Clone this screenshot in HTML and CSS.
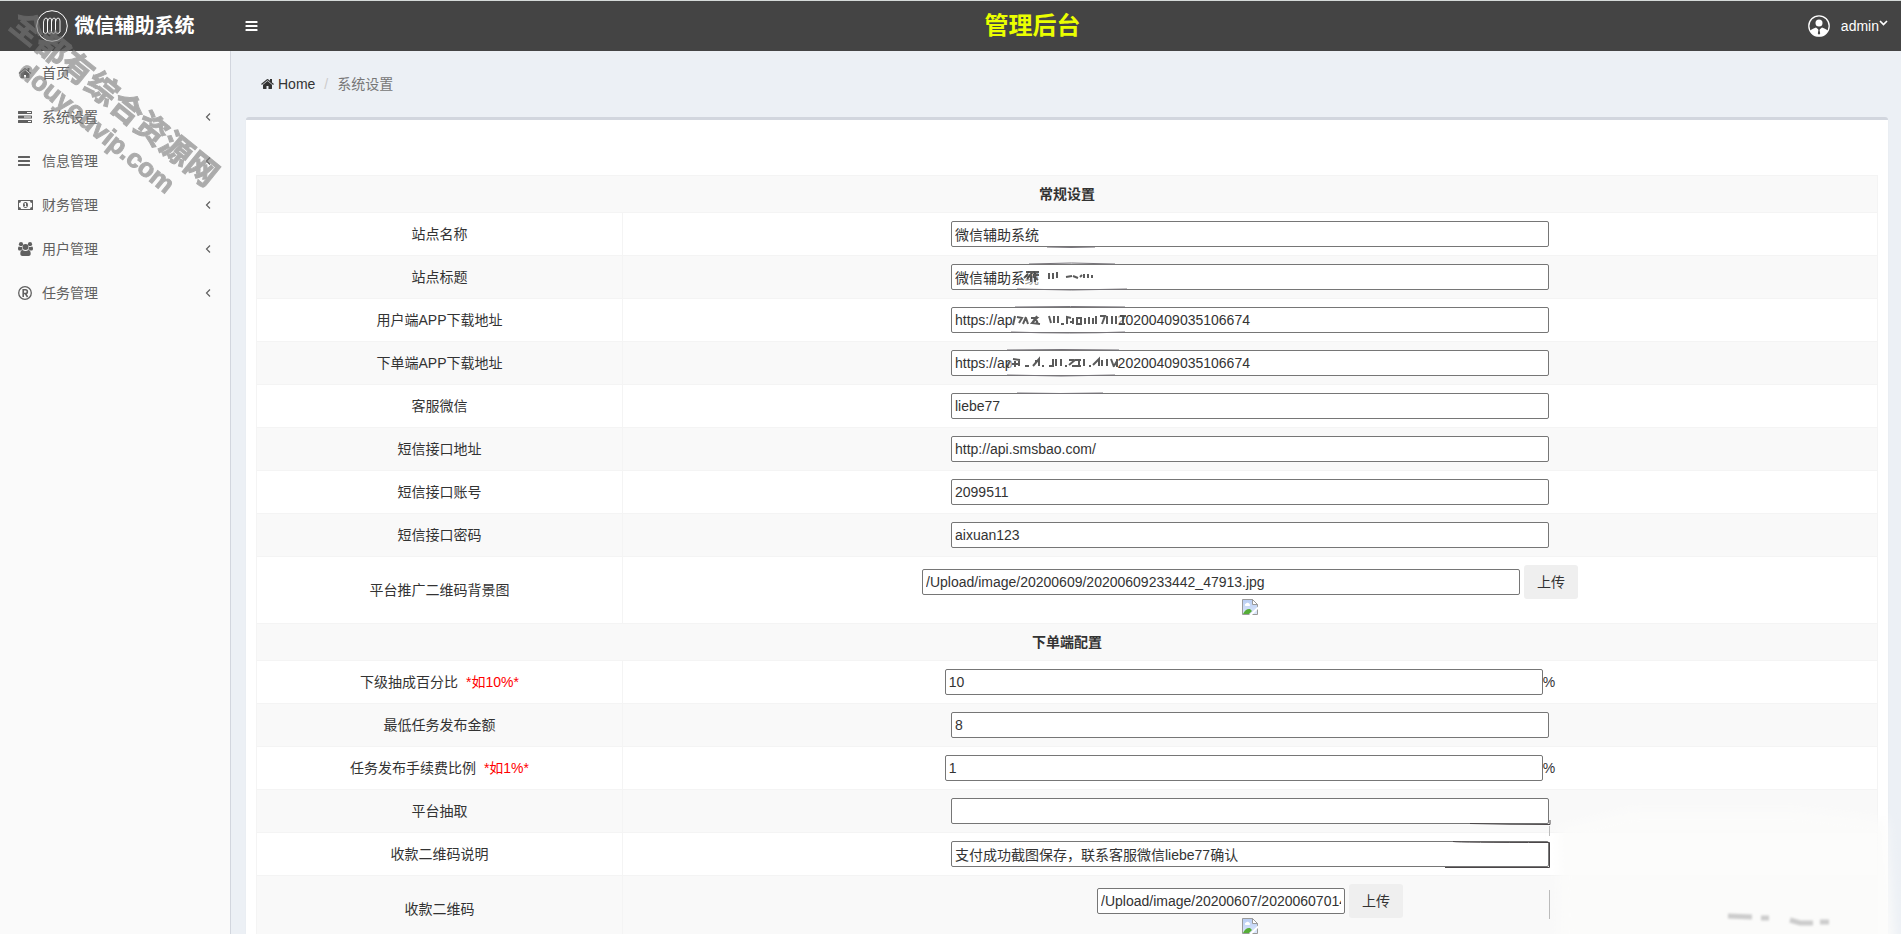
FILE: index.html
```html
<!DOCTYPE html>
<html lang="zh-CN">
<head>
<meta charset="utf-8">
<title>微信辅助系统 - 管理后台</title>
<link rel="stylesheet" href="styles.css">
</head>
<body>
<svg class="sprite" aria-hidden="true">
  <symbol id="i-home" viewBox="0 0 1664 1792"><path d="M1408 992v480q0 26-19 45t-45 19h-384v-384h-256v384h-384q-26 0-45-19t-19-45v-480q0-1 .5-3t.5-3l575-474 575 474q1 2 1 6zm223-69l-62 74q-8 9-21 11h-3q-13 0-21-7l-692-577-692 577q-12 8-24 7-13-2-21-11l-62-74q-8-10-7-23.5t11-21.500l719-599q32-26 76-26t76 26l244 204v-195q0-14 9-23t23-9h192q14 0 23 9t9 23v408l219 182q10 8 11 21.500t-7 23.500z"/></symbol>
  <symbol id="i-tasks" viewBox="0 0 14 14"><path fill-rule="evenodd" d="M.5 1h13a.5.5 0 0 1 .5.5v2a.5.5 0 0 1-.5.5H.5a.5.5 0 0 1-.5-.5v-2A.5.500 0 0 1 .5 1zM9 2v1h4V2zM.5 5.500h13a.5.500 0 0 1 .5.500v2a.5.500 0 0 1-.5.500H.5A.5.500 0 0 1 0 8V6a.5.500 0 0 1 .5-.5zM6 6.500v1h7v-1zM.5 10h13a.5.500 0 0 1 .5.500v2a.5.500 0 0 1-.5.500H.5a.5.500 0 0 1-.5-.5v-2A.5.500 0 0 1 .5 10zM10 11v1h3v-1z"/></symbol>
  <symbol id="i-bars" viewBox="0 0 12 14"><path d="M.5 2h11a.5.500 0 0 1 .5.500v1a.5.500 0 0 1-.5.500H.5a.5.500 0 0 1-.5-.5v-1A.5.500 0 0 1 .5 2zM.5 6h11a.5.500 0 0 1 .5.500v1a.5.500 0 0 1-.5.500H.5a.5.500 0 0 1-.5-.5v-1A.5.500 0 0 1 .5 6zM.5 10h11a.5.500 0 0 1 .5.500v1a.5.500 0 0 1-.5.500H.5a.5.500 0 0 1-.5-.5v-1A.5.500 0 0 1 .5 10z"/></symbol>
  <symbol id="i-money" viewBox="0 0 15 14"><path fill-rule="evenodd" d="M.5 2h14a.5.500 0 0 1 .5.500v9a.5.500 0 0 1-.5.500H.5a.5.500 0 0 1-.5-.5v-9A.5.500 0 0 1 .5 2zM3 3a2 2 0 0 1-2 2v4a2 2 0 0 1 2 2h9a2 2 0 0 1 2-2V5a2 2 0 0 1-2-2zM7.500 4C9 4 10 5.300 10 7s-1 3-2.500 3S5 8.700 5 7s1-3 2.500-3zM7.200 5L6 6l.5.600.5-.3V8.200H6.200V9h2.600v-.8H8V5z"/></symbol>
  <symbol id="i-users" viewBox="0 0 15 14"><circle cx="3" cy="2.200" r="2.100"/><circle cx="12" cy="2.200" r="2.100"/><circle cx="7.500" cy="5" r="3"/><path d="M0 6.500C0 5 .6 4.400 1.200 4.400c.5.400 1.100.7 1.800.7.500 0 .8-.1 1-.2 0 1 .3 1.900.9 2.600-.9 0-1.700.3-2.200 1H1.400C.6 8.500 0 7.900 0 6.500zM15 6.500c0-1.500-.6-2.100-1.200-2.100-.5.400-1.100.7-1.800.7-.5 0-.8-.1-1-.2 0 1-.3 1.900-.9 2.600.9 0 1.700.3 2.200 1h1.300c.8 0 1.400-.6 1.400-2zM2.300 11.800c0-2.400.8-3.900 2.300-3.900.8.600 1.800 1 2.900 1s2.100-.4 2.900-1c1.500 0 2.300 1.500 2.300 3.900 0 1.300-.8 2.200-2.100 2.200H4.400c-1.300 0-2.100-.9-2.100-2.200z"/></symbol>
  <symbol id="i-registered" viewBox="0 0 14 14"><circle cx="7" cy="7" r="6.300" fill="none" stroke="currentColor" stroke-width="1.300"/><path fill="none" stroke="currentColor" stroke-width="1.600" d="M5.200 11V3.800h2.300a1.800 1.800 0 0 1 0 3.700H5.200M7.300 7.500L9.600 11"/></symbol>
  <symbol id="i-angle" viewBox="0 0 6 10"><path fill="none" stroke="currentColor" stroke-width="1.200" d="M5 1.500L1.500 5 5 8.500"/></symbol>
  <symbol id="i-broken" viewBox="0 0 16 16"><defs><linearGradient id="sky" x2="0" y2="1"><stop offset="0" stop-color="#b8cdf3"/><stop offset="1" stop-color="#dde8fb"/></linearGradient></defs><path fill="url(#sky)" stroke="#9a9a9a" d="M.5 15.500V.5h10l5 5v10z"/><path fill="#fff" stroke="#9a9a9a" d="M10.500.5v5h5z"/><path fill="#fff" d="M3 6.500a1.500 1.500 0 0 1 1-2 2 2 0 0 1 3.500.5 1.200 1.200 0 0 1 0 2H3.500z"/><path fill="#56ad37" d="M1 15c2-4 4-5.500 7-5l2 2-3 3z"/><path fill="#fff" d="M16 7.500L7 16h3l6-6z"/></symbol>
</svg>

<header class="topbar">
  <a class="brand" href="#">
    <svg class="brand-mark" viewBox="0 0 32 32"><g fill="none" stroke="#fff"><circle cx="16" cy="16" r="15.300"/><path stroke-width=".9" d="M7.500 22.500V12q.5-4 2.500-4t1.500 3v11q-1.500 3-4 .5M11.500 22.500V12q.5-4 2.500-4t1.500 3v11q-1.500 3-4 .5M15.500 22.500V12q.5-4 2.500-4t1.500 3v11q-1.500 3-4 .5M19.500 22.500V12q.5-4 2.500-4t2 3v11q-2 3-4.500.5"/></g></svg>
    <span>微信辅助系统</span>
  </a>
  <button class="toggle" type="button" aria-label="菜单"><svg class="toggle-icon"><use href="#i-bars"/></svg></button>
  <h1 class="title">管理后台</h1>
  <button class="user" type="button">
    <svg class="avatar" viewBox="0 0 22 22"><circle cx="11" cy="11" r="10.200" fill="none" stroke="#fff" stroke-width="1.300"/><circle cx="11" cy="8" r="3.500" fill="#fff"/><path fill="#fff" d="M2 15.500c2-1.500 4-2.500 6-3L11 15l3-2.500c2 .5 4 1.500 6 3A10 10 0 0 1 2 15.500z"/><path fill="#444" d="M10.200 13.500h1.600l-.3 1.300.7 3.700-1.200 1.200-1.200-1.200.7-3.700z"/></svg>
    <span>admin</span><svg class="caret" viewBox="0 0 9 6"><path fill="none" stroke="#fff" stroke-width="1.700" d="M1 1l3.500 3.500L8 1"/></svg>
  </button>
</header>

<div class="shell">
  <nav class="sidebar">
    <a class="nav-item" href="#"><svg class="nav-icon"><use href="#i-home"/></svg><span class="nav-text">首页</span></a>
    <a class="nav-item" href="#"><svg class="nav-icon"><use href="#i-tasks"/></svg><span class="nav-text">系统设置</span><svg class="angle"><use href="#i-angle"/></svg></a>
    <a class="nav-item" href="#"><svg class="nav-icon narrow"><use href="#i-bars"/></svg><span class="nav-text">信息管理</span><svg class="angle"><use href="#i-angle"/></svg></a>
    <a class="nav-item" href="#"><svg class="nav-icon wide"><use href="#i-money"/></svg><span class="nav-text">财务管理</span><svg class="angle"><use href="#i-angle"/></svg></a>
    <a class="nav-item" href="#"><svg class="nav-icon wide"><use href="#i-users"/></svg><span class="nav-text">用户管理</span><svg class="angle"><use href="#i-angle"/></svg></a>
    <a class="nav-item" href="#"><svg class="nav-icon"><use href="#i-registered"/></svg><span class="nav-text">任务管理</span><svg class="angle"><use href="#i-angle"/></svg></a>
  </nav>

  <main class="content">
    <div class="crumbs">
      <a class="crumb-home" href="#"><svg class="crumb-icon"><use href="#i-home"/></svg>Home</a>
      <span class="crumb-sep">/</span>
      <span class="crumb-current">系统设置</span>
    </div>
    <section class="card">
      <table class="settings">
        <colgroup><col class="col-label"><col></colgroup>
        <tbody>
          <tr><th colspan="2">常规设置</th></tr>
          <tr><td><label for="f1">站点名称</label></td><td><div class="field"><input id="f1" type="text" value="微信辅助系统"></div></td></tr>
          <tr><td><label for="f2">站点标题</label></td><td><div class="field"><span class="masked"><input id="f2" type="text" value="微信辅助系统"><svg class="smudge" viewBox="0 0 200 43"><path class="haze" d="M75 10H165V33H75z"/><path class="rim" d="M78 9Q120 7 164 9M66 34Q120 36 176 34M96-8Q120-7 144-8"/><path class="ink" d="M73 23l4-4M75 17h13M76 24l5-6M80 27v-7M84 18v9M88 20h-6M87 25l-5-4M98 18v6M102 18v6M106 17v6M115 22l6-1M122 21l5 2M129 22l2-2M133 23v-4M137 19v4M141 20v3"/></svg></span></div></td></tr>
          <tr><td><label for="f3">用户端APP下载地址</label></td><td><div class="field"><span class="masked"><input id="f3" type="text" value="https://ap                           20200409035106674"><svg class="smudge" viewBox="0 0 200 43"><path class="haze" d="M62 10H173V33H62z"/><path class="rim" d="M64 9Q120 8 174 9M60 34Q120 36 174 34"/><path class="ink" d="M62 27l2-9M66 19l5 1-3 5M72 26l3-7M75 20l2 6M80 20h6l-5 5 8 1M86 18l-5 7M84 19l3 7M98 18l2 7M103 18v7M107 18v7M110 26h3M116 26v-7l4 1M122 26v-6M119 24h3M126 20v6h4v-6zM134 26v-6M138 26v-7M142 20v6M145 26v-8M149 18h5l-3 8M156 18v8M161 18v8M165 18v8M169 18h6M168 26h6M172 18v8"/></svg></span></div></td></tr>
          <tr><td><label for="f4">下单端APP下载地址</label></td><td><div class="field"><span class="masked"><input id="f4" type="text" value="https://ap                           20200409035106674"><svg class="smudge" viewBox="0 0 200 43"><path class="haze" d="M58 10H166V33H58z"/><path class="rim" d="M56 9Q110 8 168 9M56 34Q110 36 164 34M66 52Q110 53 152 52"/><path class="ink" d="M56 26l3-6M62 18l7 1M64 26v-6M68 25v-6M61 23h6M74 25h4M82 25l6-7v7M84 20h5M91 25h2M98 25h4v-7M105 18v7M110 18v7M114 25h2M118 24l6-5h6M118 19h5M121 25h9M128 18v7M133 18v7M138 25h2M142 24l6-6v7M151 19v6M156 18v7M160 18l3 8M166 20l-3 5M166 18v8"/></svg></span></div></td></tr>
          <tr><td><label for="f5">客服微信</label></td><td><div class="field"><input id="f5" type="text" value="liebe77"></div></td></tr>
          <tr><td><label for="f6">短信接口地址</label></td><td><div class="field"><input id="f6" type="text" value="http://api.smsbao.com/"></div></td></tr>
          <tr><td><label for="f7">短信接口账号</label></td><td><div class="field"><input id="f7" type="text" value="2099511"></div></td></tr>
          <tr><td><label for="f8">短信接口密码</label></td><td><div class="field"><input id="f8" type="text" value="aixuan123"></div></td></tr>
          <tr><td><label for="f9">平台推广二维码背景图</label></td><td><div class="field upload"><input id="f9" type="text" value="/Upload/image/20200609/20200609233442_47913.jpg"><button class="btn" type="button">上传</button></div><svg class="preview"><use href="#i-broken"/></svg></td></tr>
          <tr><th colspan="2">下单端配置</th></tr>
          <tr><td><label for="f10">下级抽成百分比 <span class="hint">*如10%*</span></label></td><td><div class="field"><input id="f10" type="text" value="10">%</div></td></tr>
          <tr><td><label for="f11">最低任务发布金额</label></td><td><div class="field"><input id="f11" type="text" value="8"></div></td></tr>
          <tr><td><label for="f12">任务发布手续费比例 <span class="hint">*如1%*</span></label></td><td><div class="field"><input id="f12" type="text" value="1">%</div></td></tr>
          <tr><td><label for="f13">平台抽取</label></td><td><div class="field"><input id="f13" type="text" value=""></div></td></tr>
          <tr><td><label for="f14">收款二维码说明</label></td><td><div class="field"><input id="f14" type="text" value="支付成功截图保存，联系客服微信liebe77确认"></div></td></tr>
          <tr><td><label for="f15">收款二维码</label></td><td><div class="field upload"><input id="f15" class="short" type="text" value="/Upload/image/20200607/20200607014512_83021.jpg"><button class="btn" type="button">上传</button></div><svg class="preview"><use href="#i-broken"/></svg></td></tr>
        </tbody>
      </table>
    </section>
  </main>
</div>

<div class="watermark" aria-hidden="true"><span class="wm-name">全都有综合资源网</span><span class="wm-site">douyouvip.com</span></div>
<svg class="corner" viewBox="0 0 501 154" aria-hidden="true">
  <defs><filter id="soft" x="-20%" y="-20%" width="140%" height="140%"><feGaussianBlur stdDeviation="6"/></filter><filter id="fine" x="-20%" y="-200%" width="140%" height="500%"><feGaussianBlur stdDeviation="1"/></filter></defs>
  <path filter="url(#soft)" fill="#fcfcfb" fill-opacity=".9" d="M158 48L230 30H400L485 40 496 170H160z"/>
  <path fill="none" stroke="#4a4648" d="M70 43.500Q110 44.500 150 44.500V40M53 61.500Q60 62.500 149.500 62.500V87.500H45"/>
  <path fill="none" stroke="#bbb" d="M149.500 110V139M149.500 46V56"/>
  <path filter="url(#fine)" fill="none" stroke="#ccc" stroke-width="5" d="M328 136l24 1M361 138h8M390 140l10 3h13M420 142h9"/>
</svg>
</body>
</html>
```

FILE: styles.css
```css
* {
  box-sizing: border-box;
}

body {
  display: flex;
  flex-direction: column;
  height: 100vh;
  margin: 0;
  overflow: hidden;
  position: relative;
  font: 14px/20px "Liberation Sans", "Noto Sans CJK SC", sans-serif;
  color: #333;
  background: #ecf0f5;
}

input,
button {
  font: inherit;
  color: inherit;
}

a {
  color: inherit;
  text-decoration: none;
}

svg {
  fill: currentColor;
  flex: none;
}

.sprite {
  position: absolute;
  width: 0;
  height: 0;
}

.topbar {
  display: flex;
  flex: none;
  align-items: center;
  height: 51px;
  border-top: 1px solid #d5dad8;
  background: #444;
  color: #fff;
}

.brand {
  display: flex;
  align-items: center;
  justify-content: center;
  gap: 7px;
  width: 230px;
  font-size: 20px;
  font-weight: bold;
}

.brand-mark {
  width: 32px;
  height: 32px;
}

.toggle {
  display: flex;
  padding: 15px;
  border: 0;
  background: none;
}

.toggle-icon {
  width: 13px;
  height: 14px;
}

.title {
  flex: 1;
  margin: 0;
  text-align: center;
  font-size: 24px;
  line-height: 30px;
  color: #eaff00;
}

.user {
  display: flex;
  align-items: center;
  padding: 0 13px 0 16px;
  border: 0;
  background: none;
}

.avatar {
  width: 22px;
  height: 22px;
  margin-right: 11px;
}

.caret {
  width: 9px;
  height: 6px;
  margin-bottom: 6px;
}

.shell {
  display: flex;
  flex: 1;
  min-height: 0;
}

.sidebar {
  flex: none;
  width: 231px;
  border-right: 1px solid #d2d6de;
  background: #fafafa;
  color: #606060;
}

.nav-item {
  display: flex;
  align-items: center;
  height: 44px;
  padding: 0 19px 0 18px;
}

.nav-icon {
  width: 14px;
  height: 14px;
  margin-right: 10px;
}

.nav-icon.narrow {
  width: 12px;
  margin-right: 12px;
}

.nav-icon.wide {
  width: 15px;
  margin-right: 9px;
}

.nav-text {
  flex: 1;
}

.angle {
  width: 6px;
  height: 10px;
}

.content {
  flex: 1;
  min-width: 0;
  padding: 0 13px 0 15px;
  overflow: hidden;
}

.crumbs {
  display: flex;
  align-items: center;
  height: 66px;
  padding-left: 15px;
}

.crumb-home {
  display: flex;
  align-items: center;
  gap: 4px;
}

.crumb-icon {
  width: 13px;
  height: 14px;
}

.crumb-sep {
  padding: 0 9px;
  color: #ccc;
}

.crumb-current {
  color: #777;
}

.card {
  padding: 55px 10px 10px;
  border-top: 3px solid #d2d6de;
  border-radius: 3px;
  background: #fff;
  box-shadow: 0 1px 1px rgba(0, 0, 0, 0.1);
}

.settings {
  width: 100%;
  table-layout: fixed;
  border-collapse: collapse;
}

.col-label {
  width: 366px;
}

.settings th,
.settings td {
  padding: 8px;
  border: 1px solid #f4f4f4;
  text-align: center;
  vertical-align: middle;
}

.settings tr:nth-child(odd) {
  background: #f9f9f9;
}

.hint {
  margin-left: 4px;
  color: #f00;
}

.field {
  display: flex;
  align-items: center;
  justify-content: center;
}

.upload {
  gap: 4px;
}

.field input {
  display: block;
  width: 598px;
  height: 26px;
  padding: 0 3px;
  border: 1px solid #767676;
  border-radius: 2px;
  background: #fff;
}

.field .short {
  width: 248px;
}

.btn {
  height: 34px;
  padding: 0 13px;
  border: 0;
  border-radius: 3px;
  background: #efefef;
}

.preview {
  display: block;
  width: 16px;
  height: 16px;
  margin: 0 auto;
}

.masked {
  position: relative;
}

.smudge {
  position: absolute;
  top: -9px;
  left: 0;
  width: 200px;
  height: 43px;
  overflow: visible;
  fill: none;
  pointer-events: none;
}

.haze {
  fill: #fff;
  fill-opacity: 0.5;
}

.rim {
  stroke: #77747a;
}

.ink {
  stroke: #333;
  stroke-width: 2;
  opacity: 0.8;
  filter: blur(0.4px);
}

.watermark {
  position: absolute;
  top: 6px;
  left: 25px;
  display: flex;
  flex-direction: column;
  gap: 2px;
  transform: rotate(39deg);
  transform-origin: 0 0;
  font-weight: bold;
  white-space: nowrap;
  color: #787878;
  -webkit-text-stroke: 1px #787878;
  opacity: 0.6;
  pointer-events: none;
}

.wm-name {
  font-size: 32px;
  line-height: 32px;
}

.wm-site {
  padding-left: 36px;
  font-size: 26px;
  line-height: 30px;
}

.corner {
  position: absolute;
  right: 0;
  bottom: 0;
  width: 501px;
  height: 154px;
  pointer-events: none;
}
```
